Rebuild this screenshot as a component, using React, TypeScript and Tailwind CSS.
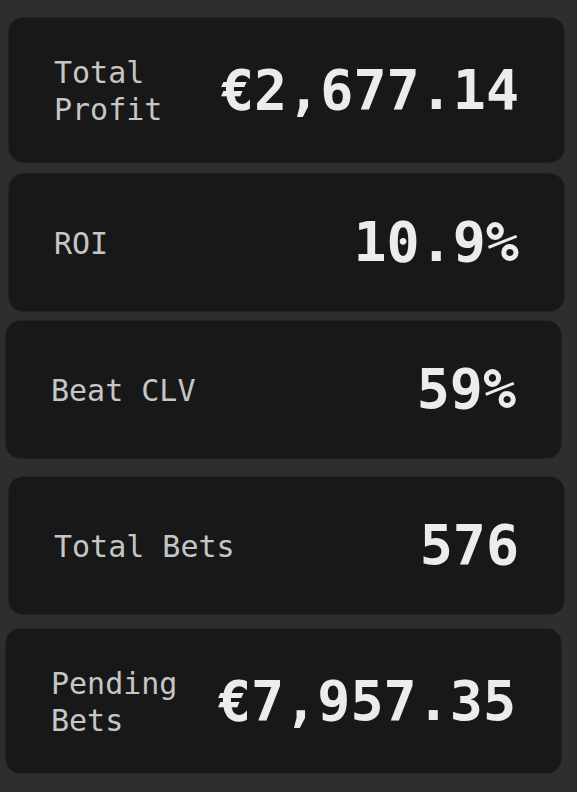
const STATS = [
  { label: "Total Profit", value: "€2,677.14", box: "mt-[17px] ml-[8px]" },
  { label: "ROI", value: "10.9%", box: "mt-[10px] ml-[8px]" },
  { label: "Beat CLV", value: "59%", box: "mt-[8px] ml-[5px]" },
  { label: "Total Bets", value: "576", box: "mt-[17px] ml-[8px]" },
  { label: "Pending Bets", value: "€7,957.35", box: "mt-[13px] ml-[5px]" },
]

export default function App() {
  return (
    <div
      className="min-h-[792px] w-[577px] bg-[#2e2e30] pb-[19px]"
      style={{ fontFamily: '"DejaVu Sans Mono", "Liberation Mono", monospace' }}
    >
      <div className="flex flex-col">
        {STATS.map(s => (
          <div
            key={s.label}
            className={`flex w-[557px] items-center justify-between gap-4 rounded-[15px] border border-[#242424] bg-[#181818] py-[35px] pl-[45px] pr-[45px] ${s.box}`}
          >
            <p className="min-w-0 translate-y-[1px] text-[30px] leading-[37px] text-[#c6c6c6]">{s.label}</p>
            <p className="shrink-0 text-[55px] font-bold leading-[67px] text-[#ececec]">{s.value}</p>
          </div>
        ))}
      </div>
    </div>
  )
}
